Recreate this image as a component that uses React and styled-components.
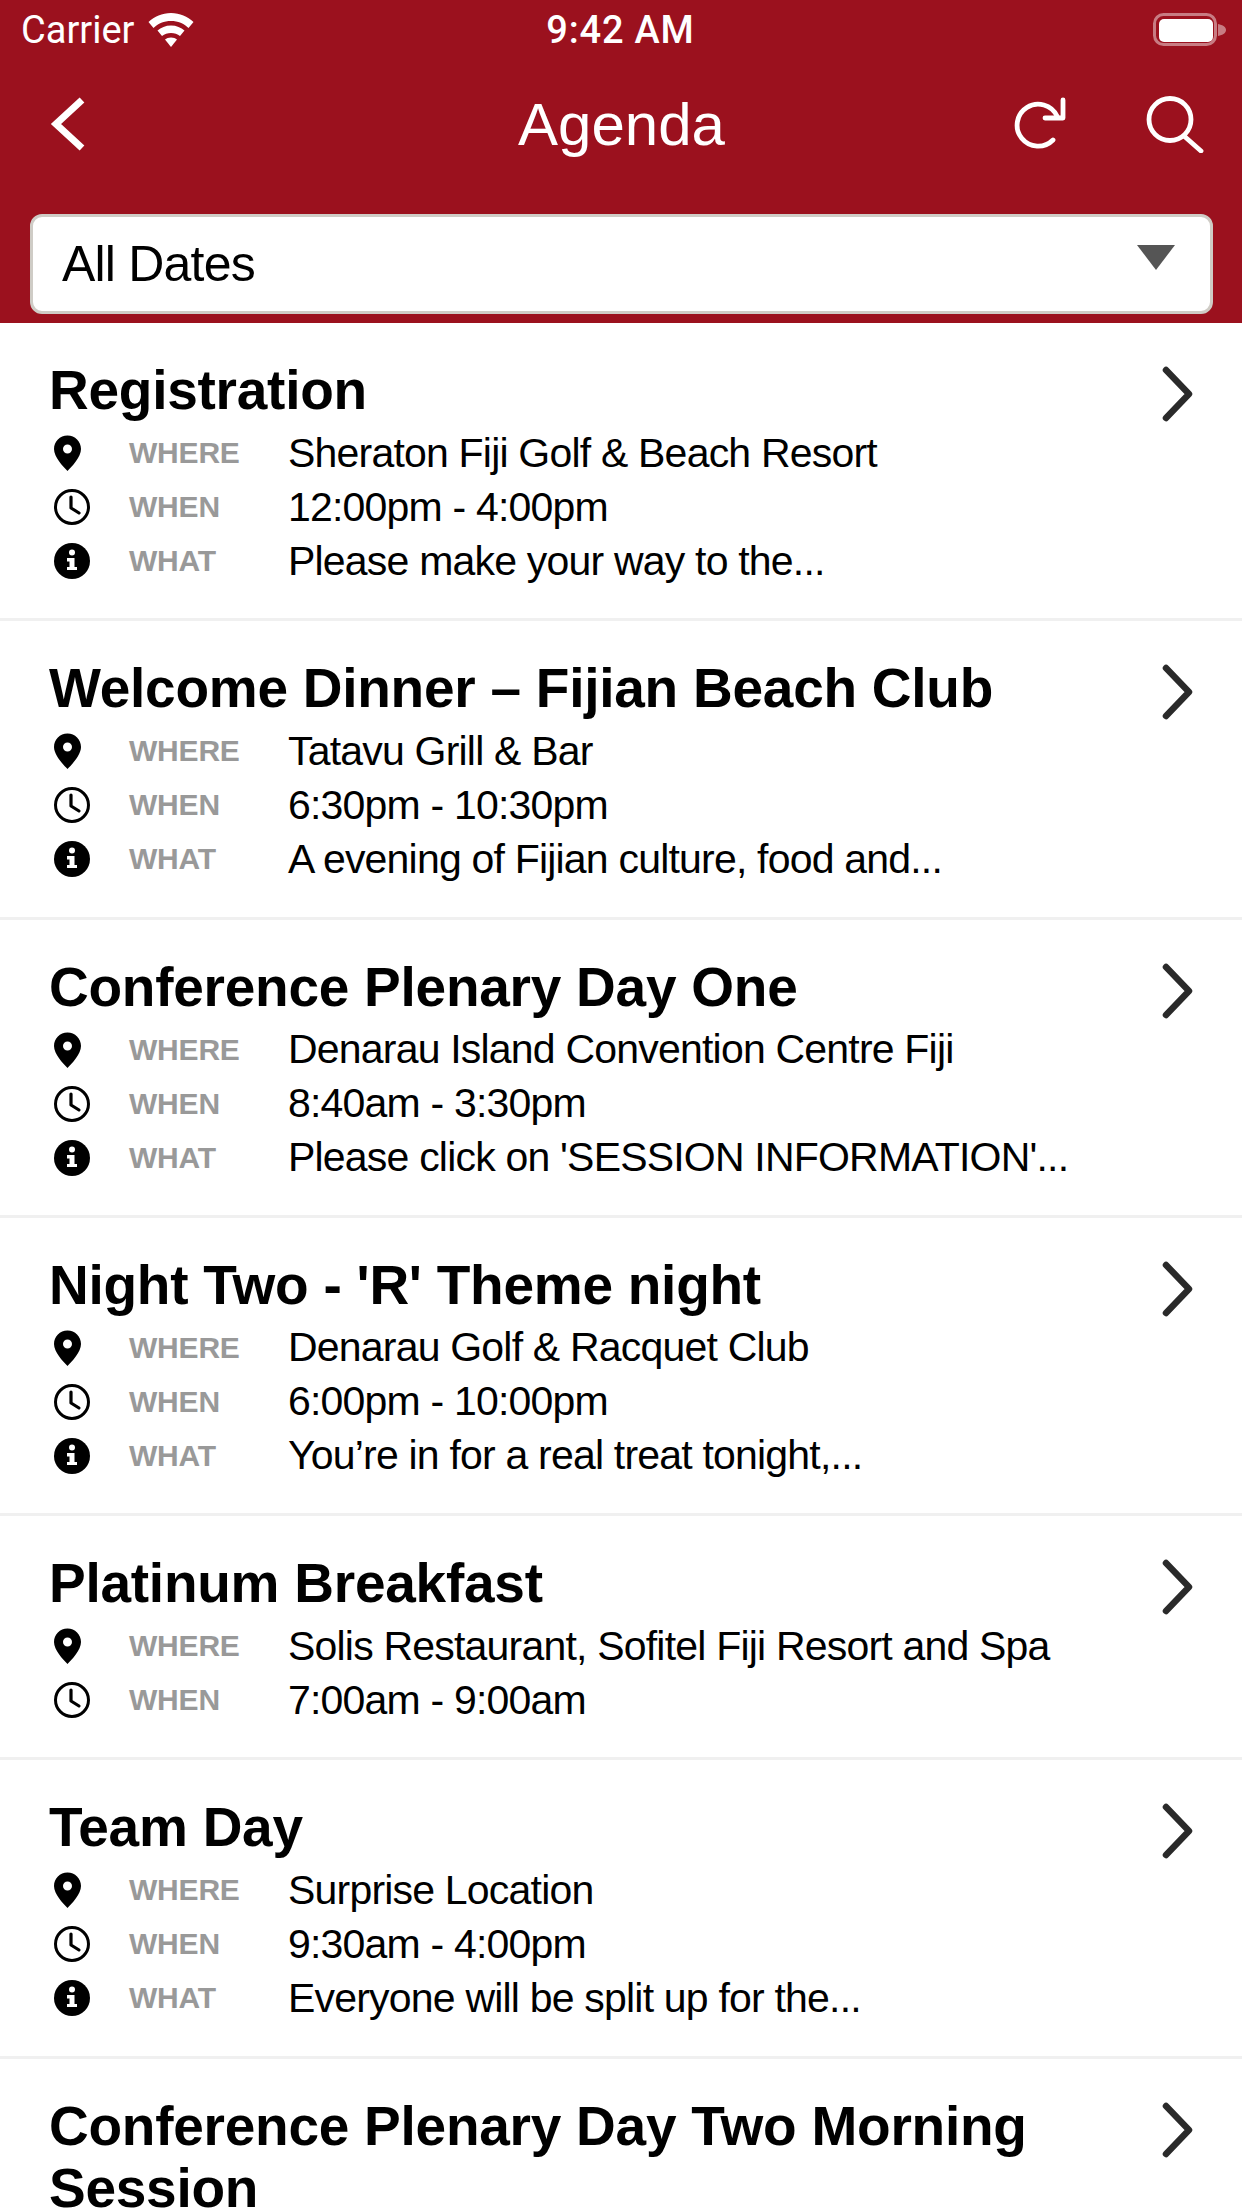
import React from "react";
import styled, { createGlobalStyle } from "styled-components";

const Global = createGlobalStyle`
  html, body { margin: 0; padding: 0; background: #fff; }
  body { font-family: "Liberation Sans", Arial, sans-serif; }
`;

const Page = styled.div`
  width: 1242px;
  height: 2208px;
  overflow: hidden;
  background: #fff;
`;

const Header = styled.header`
  background: #9b111e;
  height: 323px;
  padding: 0 29px 8px 30px;
  box-sizing: border-box;
  display: flex;
  flex-direction: column;
  color: #fff;
`;

const StatusBar = styled.div`
  height: 60px;
  margin-left: -9px;
  margin-right: -13px;
  display: grid;
  grid-template-columns: 1fr auto 1fr;
  align-items: center;
`;

const Carrier = styled.div`
  display: flex;
  align-items: center;
  gap: 14px;
  font-family: Roboto, sans-serif;
  font-size: 38px;
`;

const Clock = styled.div`
  margin-right: 6px;
  font-family: Roboto, sans-serif;
  font-weight: 500;
  font-size: 38px;
  letter-spacing: 0.8px;
`;

const Battery = styled.div`
  justify-self: end;
  display: flex;
  align-items: center;
  line-height: 0;
`;

const NavBar = styled.nav`
  height: 128px;
  display: grid;
  grid-template-columns: 1fr auto 1fr;
  align-items: center;
`;

const Back = styled.div`
  padding-left: 20px;
  line-height: 0;
`;

const NavTitle = styled.h1`
  margin: 0;
  font-size: 60px;
  font-weight: 400;
`;

const NavActions = styled.div`
  justify-self: end;
  padding-right: 7px;
  display: flex;
  align-items: center;
  gap: 80px;
  line-height: 0;
`;

const Select = styled.div`
  margin-top: 26px;
  height: 100px;
  box-sizing: border-box;
  background: #fff;
  border: 3px solid #cfccc6;
  border-radius: 12px;
  display: flex;
  align-items: center;
  justify-content: space-between;
  padding: 0 35px 0 29px;
  color: #000;
  font-size: 50px;
  letter-spacing: -0.8px;
`;

const Caret = styled.span`
  width: 0;
  height: 0;
  margin-bottom: 14px;
  border-left: 19px solid transparent;
  border-right: 19px solid transparent;
  border-top: 25px solid #555;
`;

const List = styled.main`
  display: flex;
  flex-direction: column;
`;

const Row = styled.article`
  position: relative;
  padding: 36px 130px 30.3px 49px;
  border-bottom: 3px solid #f0f0f0;
`;

const Title = styled.h2`
  margin: 0 0 5px;
  font-size: 55px;
  line-height: 62px;
  font-weight: 700;
  color: #000;
  letter-spacing: -0.25px;
`;

const Detail = styled.div`
  display: grid;
  grid-template-columns: 80px 159px 1fr;
  align-items: center;
  height: 54px;
  white-space: nowrap;
`;

const IconCell = styled.div`
  line-height: 0;
  padding-left: 2px;
`;

const Label = styled.span`
  color: #999;
  font-size: 30px;
  font-weight: 700;
  letter-spacing: -0.2px;
`;

const Value = styled.span`
  color: #000;
  font-size: 41px;
  letter-spacing: -0.8px;
`;

const Disclosure = styled.div`
  position: absolute;
  top: 43px;
  right: 46px;
  line-height: 0;
`;

const PinIcon = () => (
  <svg width="40" height="38" viewBox="0 0 40 38">
    <path
      fillRule="evenodd"
      d="M16.500 1.500C8.900 1.500 3 7.600 3 15c0 8 9 17.500 13.500 22C21 32.500 30 23 30 15 30 7.600 24.100 1.500 16.500 1.500Zm0 9a4.500 4.500 0 1 1 0 9 4.500 4.500 0 0 1 0-9Z"
      fill="#000"
    />
  </svg>
);

const ClockIcon = () => (
  <svg width="40" height="38" viewBox="0 0 40 38" fill="none" stroke="#000" strokeWidth="3">
    <circle cx="21" cy="19" r="16.500" />
    <path d="M20 9V20L28 25" strokeWidth="3.200" strokeLinecap="round" strokeLinejoin="round" />
  </svg>
);

const InfoIcon = () => (
  <svg width="40" height="38" viewBox="0 0 40 38">
    <circle cx="21" cy="19" r="18" fill="#000" />
    <circle cx="21" cy="10.500" r="3" fill="#fff" />
    <path d="M16 16h7.500v9H26v3H16v-3h2.500v-5.500H16Z" fill="#fff" />
  </svg>
);

const icons = { WHERE: PinIcon, WHEN: ClockIcon, WHAT: InfoIcon };

const DetailRow = ({ label, value }) => {
  const Icon = icons[label];
  return (
    <Detail>
      <IconCell><Icon /></IconCell>
      <Label>{label}</Label>
      <Value>{value}</Value>
    </Detail>
  );
};

const agenda = [
  { title: "Registration", where: "Sheraton Fiji Golf & Beach Resort", when: "12:00pm - 4:00pm", what: "Please make your way to the..." },
  { title: "Welcome Dinner – Fijian Beach Club", where: "Tatavu Grill & Bar", when: "6:30pm - 10:30pm", what: "A evening of Fijian culture, food and..." },
  { title: "Conference Plenary Day One", where: "Denarau Island Convention Centre Fiji", when: "8:40am - 3:30pm", what: "Please click on 'SESSION INFORMATION'..." },
  { title: "Night Two - 'R' Theme night", where: "Denarau Golf & Racquet Club", when: "6:00pm - 10:00pm", what: "You’re in for a real treat tonight,..." },
  { title: "Platinum Breakfast", where: "Solis Restaurant, Sofitel Fiji Resort and Spa", when: "7:00am - 9:00am" },
  { title: "Team Day", where: "Surprise Location", when: "9:30am - 4:00pm", what: "Everyone will be split up for the..." },
  { title: "Conference Plenary Day Two Morning Session", where: "Denarau Island Convention Centre Fiji", when: "8:30am - 12:30pm" },
];

export default function App() {
  return (
    <Page>
      <Global />
      <Header>
        <StatusBar>
          <Carrier>
            Carrier
            <svg width="46" height="34" viewBox="0 0 46 34" fill="#fff">
              <path d="M23 0C14 0 6.500 3.500.5 9l5 6C10 10.500 16 8 23 8s13 2.500 17.500 7l5-6C39.500 3.500 32 0 23 0Z" />
              <path d="M23 12.500c-5.500 0-10 2-13.500 5l4.500 5.500c2.500-2 5.500-3 9-3s6.500 1 9 3l4.500-5.500c-3.500-3-8-5-13.500-5Z" />
              <path d="M23 24.500c-2.500 0-4.500.7-6 2l6 7.500 6-7.500c-1.500-1.300-3.500-2-6-2Z" />
            </svg>
          </Carrier>
          <Clock>9:42 AM</Clock>
          <Battery>
            <svg width="73" height="34" viewBox="0 0 73 34">
              <rect x="1.500" y="1.500" width="61" height="30" rx="9" fill="none" stroke="#fff" strokeOpacity=".45" strokeWidth="3" />
              <rect x="6" y="6" width="54" height="23" rx="5" fill="#fff" />
              <path d="M65 11c5 1 8 3 8 6s-3 5-8 6Z" fill="#fff" fillOpacity=".45" />
            </svg>
          </Battery>
        </StatusBar>
        <NavBar>
          <Back>
            <svg width="36" height="54" viewBox="0 0 36 54" fill="none" stroke="#fff" strokeWidth="7">
              <path d="M32 3 6 27l26 24" />
            </svg>
          </Back>
          <NavTitle>Agenda</NavTitle>
          <NavActions>
            <svg width="54" height="54" viewBox="0 0 54 54" fill="none" stroke="#fff" strokeWidth="4.800" strokeLinecap="round" strokeLinejoin="round">
              <path d="M41 43A21 21 0 1 1 45 19" />
              <path d="M51 3V21H33" />
            </svg>
            <svg width="60" height="58" viewBox="0 0 60 58" fill="none" stroke="#fff" strokeWidth="4.800" strokeLinecap="round">
              <circle cx="24" cy="24.500" r="21" />
              <path d="M38 41 55 56" />
            </svg>
          </NavActions>
        </NavBar>
        <Select>
          All Dates
          <Caret />
        </Select>
      </Header>
      <List>
        {agenda.map((item) => (
          <Row key={item.title}>
            <Title>{item.title}</Title>
            <DetailRow label="WHERE" value={item.where} />
            <DetailRow label="WHEN" value={item.when} />
            {item.what && <DetailRow label="WHAT" value={item.what} />}
            <Disclosure>
              <svg width="36" height="56" viewBox="0 0 36 56" fill="none" stroke="#2a2a2a" strokeWidth="6.500" strokeLinecap="round" strokeLinejoin="round">
                <path d="M6 4 29 28 6 52" />
              </svg>
            </Disclosure>
          </Row>
        ))}
      </List>
    </Page>
  );
}
